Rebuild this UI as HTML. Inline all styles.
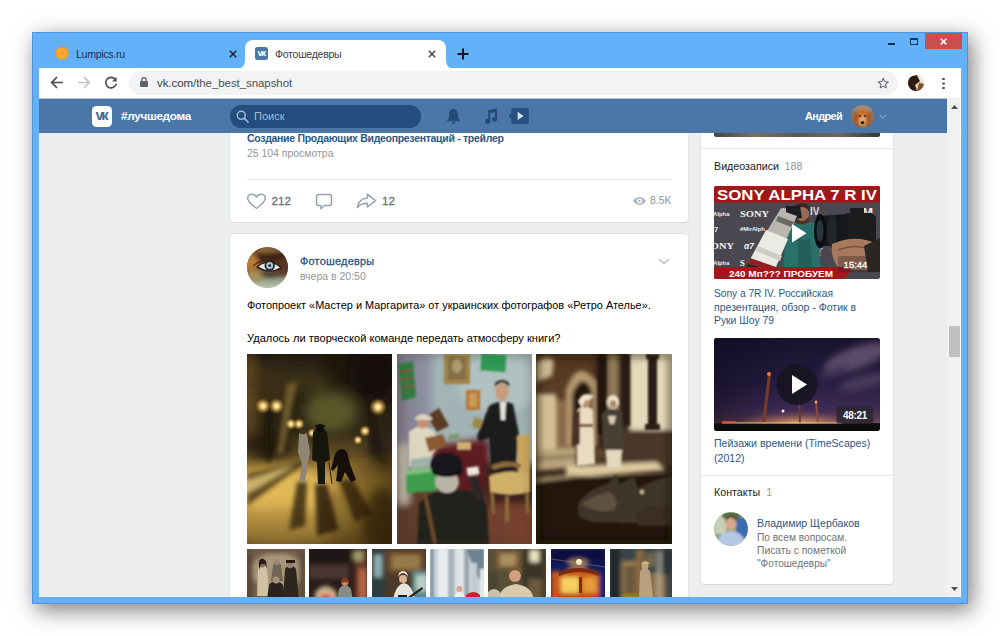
<!DOCTYPE html>
<html lang="ru">
<head>
<meta charset="utf-8">
<title>Фотошедевры</title>
<style>
*{box-sizing:border-box;margin:0;padding:0}
html,body{width:1000px;height:636px;overflow:hidden;background:#fff;font-family:"Liberation Sans",sans-serif;}
.abs{position:absolute}
#win{position:absolute;left:32px;top:32px;width:936px;height:572px;background:#63b1f8;border:1px solid #4f94d6;
  box-shadow:4px 6px 21px rgba(0,0,0,.52);}
#inner{position:absolute;left:39px;top:68px;width:922px;height:529px;background:#edeef0;overflow:hidden}
/* tab strip */
.tabtxt{position:absolute;font-size:10.6px;letter-spacing:-.3px;color:#1f2d3d;white-space:nowrap;line-height:14px}
#tab2{position:absolute;left:245px;top:40px;width:201px;height:29px;background:#fff;border-radius:8px 8px 0 0}
/* toolbar */
#pg{position:absolute;left:-39px;top:-68px;width:1000px;height:636px}
#toolbar{position:absolute;left:39px;top:68px;width:922px;height:30px;background:#fff}
#omni{position:absolute;left:129px;top:71px;width:769px;height:24px;border-radius:12px;background:#f1f3f4}
#url{position:absolute;left:157px;top:74.500px;font-size:11.5px;letter-spacing:-.07px;line-height:16px;color:#4d5156;white-space:nowrap}
#url b{font-weight:normal;color:#3a3d41}
/* vk header */
#vkh{position:absolute;left:39px;top:98px;width:908px;height:35px;background:#4a76a8;border-top:1px solid #a9bfd8}
#vklogo{position:absolute;left:92px;top:106px;width:20px;height:20.500px;border-radius:4.500px;background:#fff}
#hash{position:absolute;left:121px;top:108px;font-size:11.8px;line-height:16px;font-weight:bold;color:#fff;letter-spacing:-.35px;white-space:nowrap}
#search{position:absolute;left:230px;top:104.500px;width:191px;height:23.400px;border-radius:12px;background:#244c7c}
#search span{position:absolute;left:24px;top:3.700px;font-size:11px;line-height:16px;color:#a3bdd6}
#uname{position:absolute;left:805px;top:108px;font-size:10.8px;line-height:16px;font-weight:bold;color:#fff;letter-spacing:-.55px}
/* scrollbar */
#sb{position:absolute;left:947px;top:98px;width:14px;height:499px;background:#f1f1f1;border-right:1px solid #fcfcfc}
#sbthumb{position:absolute;left:949px;top:326px;width:11px;height:31px;background:#c1c1c1}
/* cards */
.card{position:absolute;background:#fff;border-radius:4px;box-shadow:0 1px 0 0 #d7d8db,0 0 0 1px #e3e4e8}
.t13{position:absolute;font-size:13px;line-height:16px;white-space:nowrap;color:#000}
.grey{color:#939699}
.blue{color:#2a5885}
</style>
</head>
<body>
<div id="win"></div>

<!-- tab strip -->
<div id="tab2"></div>
<svg class="abs" style="left:237px;top:61px" width="8" height="8"><path d="M8 0v8H0a8 8 0 0 0 8-8z" fill="#fff"/></svg>
<svg class="abs" style="left:446px;top:61px" width="8" height="8"><path d="M0 0v8h8a8 8 0 0 1-8-8z" fill="#fff"/></svg>
<!-- lumpics favicon -->
<svg class="abs" style="left:55px;top:46px" width="14" height="14" viewBox="0 0 14 14"><circle cx="7" cy="7" r="6.6" fill="#f39a1e"/><circle cx="7" cy="7" r="5.2" fill="#fbb23a"/><g stroke="#f39a1e" stroke-width=".9"><path d="M7 2v10M2 7h10M3.5 3.5l7 7M10.5 3.5l-7 7"/></g></svg>
<div class="tabtxt" id="tt1" style="left:76px;top:46.500px;color:#15305a">Lumpics.ru</div>
<svg class="abs" style="left:228.500px;top:50px" width="8" height="8" viewBox="0 0 8 8"><path d="M.8.800l6.400 6.400M7.200.800L.8 7.200" stroke="#1b1f24" stroke-width="1.400"/></svg>
<!-- vk favicon -->
<svg class="abs" style="left:255px;top:47px" width="13" height="13" viewBox="0 0 13 13"><rect width="13" height="13" rx="2.5" fill="#4a76a8"/><text x="5.900" y="9.300" font-family="Liberation Sans, sans-serif" font-size="9.500" font-weight="bold" fill="#fff" text-anchor="middle" letter-spacing="-1.500">vк</text></svg>
<div class="tabtxt" id="tt2" style="left:275px;top:46.500px;color:#3c4043">Фотошедевры</div>
<svg class="abs" style="left:427.500px;top:50px" width="8" height="8" viewBox="0 0 8 8"><path d="M.8.800l6.400 6.400M7.200.800L.8 7.200" stroke="#3c4043" stroke-width="1.400"/></svg>
<svg class="abs" style="left:457px;top:48px" width="12" height="12" viewBox="0 0 12 12"><path d="M6 .5v11M.5 6h11" stroke="#10151b" stroke-width="2"/></svg>
<!-- window controls -->
<div class="abs" style="left:888px;top:43px;width:7px;height:2px;background:#0d2b4d"></div>
<div class="abs" style="left:909.500px;top:38px;width:8.500px;height:6.700px;border:1px solid #17365c;border-top-width:2px"></div>
<div class="abs" style="left:924.600px;top:32.500px;width:37.400px;height:16.700px;background:#c9504c"></div>
<svg class="abs" style="left:940.200px;top:38.200px" width="7.200" height="7.200" viewBox="0 0 9 9"><path d="M1 1l7 7M8 1l-7 7" stroke="#fff" stroke-width="1.900"/></svg>
<div id="inner"><div id="pg">
<!-- card 1 -->
<div class="card" style="left:230px;top:100px;width:458px;height:122px"></div>
<div class="t13 blue" id="c1title" style="left:247px;top:130.300px;font-size:10.5px;font-weight:bold;letter-spacing:-.3px">Создание Продающих Видеопрезентаций - трейлер</div>
<div class="t13 grey" id="c1views" style="left:247px;top:146.400px;font-size:10.45px">25 104 просмотра</div>
<div class="abs" style="left:247px;top:179px;width:425px;height:1px;background:#e7e8ec"></div>
<svg class="abs" style="left:246px;top:193px" width="21" height="17" viewBox="0 0 21 17"><path d="M10.500 15.300C7 12.600 1.700 9.200 1.700 5.300 1.700 2.900 3.500 1.200 5.800 1.200c1.900 0 3.500 1 4.700 2.900 1.200-1.900 2.800-2.900 4.700-2.900 2.300 0 4.100 1.700 4.100 4.100 0 3.900-5.300 7.300-8.800 10z" fill="none" stroke="#99a2ad" stroke-width="1.500" stroke-linejoin="round"/></svg>
<div class="t13" id="n212" style="left:271.500px;top:193px;font-size:11.7px;color:#67707a;-webkit-text-stroke:.3px #67707a">212</div>
<svg class="abs" style="left:315px;top:193px" width="18" height="17" viewBox="0 0 18 17"><path d="M3.500 1.500h11a2 2 0 0 1 2 2v7a2 2 0 0 1-2 2H9.500L6 15.800V12.500H3.500a2 2 0 0 1-2-2v-7a2 2 0 0 1 2-2z" fill="none" stroke="#99a2ad" stroke-width="1.500" stroke-linejoin="round"/></svg>
<svg class="abs" style="left:356px;top:193px" width="21" height="16" viewBox="0 0 21 16"><path d="M11.500 1.200l8 6.400-8 6.400v-3.800C6.500 10.200 3.500 11.500 1.300 14.500 2 9.500 5 5.500 11.500 5z" fill="none" stroke="#99a2ad" stroke-width="1.500" stroke-linejoin="round"/></svg>
<div class="t13" id="n12" style="left:382px;top:193px;font-size:11.7px;color:#67707a;-webkit-text-stroke:.3px #67707a">12</div>
<svg class="abs" style="left:633px;top:197px" width="13" height="8" viewBox="0 0 13 8"><path d="M6.500 0C3.500 0 1.300 1.800 0 4c1.300 2.200 3.500 4 6.500 4S11.700 6.200 13 4C11.700 1.800 9.500 0 6.500 0z" fill="#b2b9c2"/><circle cx="6.500" cy="4" r="2.500" fill="#fff"/><circle cx="6.500" cy="4" r="1.200" fill="#b2b9c2"/></svg>
<div class="t13" id="n85k" style="left:650px;top:193px;font-size:10.4px;color:#909399">8.5K</div>

<!-- card 2 -->
<div class="card" style="left:230px;top:234px;width:458px;height:400px"></div>
<!--AVATAR--><svg class="abs" style="left:247px;top:247px" width="41" height="41" viewBox="0 0 41 41" ><defs><clipPath id="avc"><circle cx="20.500" cy="20.500" r="20.500"/></clipPath>
<linearGradient id="avg" x1="0" y1="0" x2="0" y2="1"><stop offset="0" stop-color="#7a5a34"/><stop offset=".2" stop-color="#5a3420"/><stop offset=".45" stop-color="#6a4428"/><stop offset=".62" stop-color="#7a6840"/><stop offset=".8" stop-color="#93a088"/><stop offset="1" stop-color="#bcc4b0"/></linearGradient></defs>
<g clip-path="url(#avc)"><rect width="41" height="41" fill="url(#avg)"/>
<g filter="url(#b2)"><ellipse cx="4" cy="15" rx="8" ry="9" fill="#b87a38"/><ellipse cx="24" cy="10" rx="15" ry="5" fill="#3e2218"/><ellipse cx="37" cy="20" rx="6" ry="9" fill="#5a3422"/><ellipse cx="8" cy="29" rx="8" ry="5" fill="#a89058"/><ellipse cx="24" cy="27" rx="11" ry="3" fill="#4a3a30"/><ellipse cx="20" cy="3" rx="12" ry="3" fill="#8a6a3c"/></g>
<g filter="url(#bh)"><path d="M9 20 q13-11 26 1 q-12 8 -26-1z" fill="#2a1c18"/><path d="M11.500 19.500 q11-8 21.500 1 q-10 6.500 -21.500-1z" fill="#ece8e0"/>
<circle cx="22.700" cy="18.600" r="5.200" fill="#1c2226"/><circle cx="22.700" cy="18.600" r="3.500" fill="#a9c6d2"/><circle cx="22.700" cy="18.600" r="1.400" fill="#20282c"/>
<path d="M6 19 q14-12 30 1" stroke="#3a241c" stroke-width="1.200" fill="none" opacity=".8"/></g></g></svg>
<!--/AVATAR-->
<div class="t13 blue" id="c2name" style="left:300px;top:253px;font-size:10.9px;letter-spacing:.25px;-webkit-text-stroke:.3px #2a5885">Фотошедевры</div>
<div class="t13 grey" id="c2date" style="left:300px;top:268px;font-size:10.5px">вчера в 20:50</div>
<svg class="abs" style="left:658.200px;top:258.200px" width="12" height="7" viewBox="0 0 12 7"><path d="M.8 1l5.200 4.400L11.200 1" fill="none" stroke="#bcc1c8" stroke-width="1.500"/></svg>
<div class="t13" id="c2l1" style="left:247px;top:297px;font-size:10.92px">Фотопроект «Мастер и Маргарита» от украинских фотографов «Ретро Ателье».</div>
<div class="t13" id="c2l2" style="left:247px;top:330px;font-size:11.08px">Удалось ли творческой команде передать атмосферу книги?</div>
<!--PHOTOS--><svg width="0" height="0" style="position:absolute"><defs>
<filter id="b1" x="-20%" y="-20%" width="140%" height="140%"><feGaussianBlur stdDeviation="1"/></filter>
<filter id="b2" x="-20%" y="-20%" width="140%" height="140%"><feGaussianBlur stdDeviation="2"/></filter>
<filter id="b3" x="-30%" y="-30%" width="160%" height="160%"><feGaussianBlur stdDeviation="3.500"/></filter>
<filter id="b6" x="-40%" y="-40%" width="180%" height="180%"><feGaussianBlur stdDeviation="6"/></filter>
<filter id="b10" x="-50%" y="-50%" width="200%" height="200%"><feGaussianBlur stdDeviation="10"/></filter>
<filter id="bh" x="-10%" y="-10%" width="120%" height="120%"><feGaussianBlur stdDeviation=".5"/></filter>
</defs></svg>
<svg class="abs" style="left:247px;top:354px" width="145" height="190" viewBox="0 0 145 190" ><defs><clipPath id="p1c"><rect width="145" height="190"/></clipPath>
<linearGradient id="p1g" x1="0" y1="0" x2="0" y2="1"><stop offset="0" stop-color="#1b150b"/><stop offset=".4" stop-color="#2e2714"/><stop offset=".54" stop-color="#6a5326"/><stop offset=".64" stop-color="#b8923e"/><stop offset=".8" stop-color="#c29a44"/><stop offset="1" stop-color="#9a7a36"/></linearGradient>
<linearGradient id="p1r" x1="0" y1="0" x2="1" y2="0"><stop offset="0" stop-color="#2e1e08" stop-opacity="0"/><stop offset=".85" stop-color="#2e1e08" stop-opacity=".7"/></linearGradient><linearGradient id="p1b" x1="0" y1="0" x2="0" y2="1"><stop offset=".8" stop-color="#2e1e08" stop-opacity="0"/><stop offset="1" stop-color="#2e1e08" stop-opacity=".45"/></linearGradient><radialGradient id="lamp"><stop offset="0" stop-color="#fffbe0"/><stop offset=".3" stop-color="#f8d67c" stop-opacity=".95"/><stop offset="1" stop-color="#c88a2c" stop-opacity="0"/></radialGradient></defs>
<g clip-path="url(#p1c)"><rect width="145" height="190" fill="url(#p1g)"/>
<g filter="url(#b6)">
<ellipse cx="2" cy="40" rx="7" ry="45" fill="#6a5026"/>
<ellipse cx="26" cy="30" rx="22" ry="26" fill="#3a2d15"/><ellipse cx="84" cy="58" rx="26" ry="20" fill="#5a5629"/><ellipse cx="62" cy="28" rx="20" ry="12" fill="#3a3218"/>
<ellipse cx="45" cy="8" rx="36" ry="8" fill="#2a2212"/>
<ellipse cx="128" cy="22" rx="26" ry="26" fill="#14100a"/>
<ellipse cx="134" cy="90" rx="14" ry="26" fill="#2a2413"/>
<ellipse cx="22" cy="90" rx="24" ry="16" fill="#261e10"/>
<ellipse cx="40" cy="136" rx="58" ry="20" fill="#e0b856"/>
<ellipse cx="36" cy="172" rx="50" ry="22" fill="#c9a24a"/>
<ellipse cx="136" cy="168" rx="20" ry="34" fill="#4a3a1a"/>
<ellipse cx="100" cy="118" rx="36" ry="7" fill="#ad8d48"/>
<ellipse cx="95" cy="150" rx="20" ry="16" fill="#a8863a"/>
</g>
<g filter="url(#b2)">
<path d="M0 120 L62 106 L0 152z" fill="#2e2410" opacity=".7"/>
<path d="M0 127 L48 111 L0 139z" fill="#e0c57a" opacity=".85"/>
<path d="M40 30 L50 28 L36 100 L30 100z" fill="#7c6534" opacity=".8"/>
<path d="M120 40 L126 40 L132 100 L126 100z" fill="#18130a" opacity=".7"/>
<path d="M20 55 L24 55 L23 108 L20 108z" fill="#18130a"/>
<path d="M50 128 L60 128 L58 172 L42 176z" fill="#3a2a10" opacity=".85"/>
<path d="M68 130 L80 130 L92 176 L70 182z" fill="#33250e" opacity=".9"/>
<path d="M92 126 L106 126 L126 160 L108 168z" fill="#35270f" opacity=".85"/>
</g>
<rect x="72" y="104" width="90" height="100" fill="url(#p1r)" filter="url(#b6)"/><rect width="145" height="190" fill="url(#p1b)"/><circle cx="16" cy="52" r="8" fill="url(#lamp)"/><circle cx="29.500" cy="52" r="8" fill="url(#lamp)"/>
<circle cx="44" cy="70" r="6" fill="url(#lamp)"/><circle cx="52" cy="70" r="6" fill="url(#lamp)"/>
<circle cx="131" cy="53" r="9" fill="url(#lamp)"/><circle cx="118" cy="77" r="6" fill="url(#lamp)"/><circle cx="111" cy="86" r="5" fill="url(#lamp)"/><circle cx="65" cy="79" r="5" fill="url(#lamp)"/>
<g filter="url(#bh)">
<path d="M52 80 q4-6 8 0 l3 18 -2 12 -3 18 -6 0 3-18 -4-12z" fill="#8e8670"/>
<circle cx="56" cy="77" r="3.300" fill="#3a3020"/>
<path d="M66 78 q7-8 14 0 l3 28 -5 2 0 22 -7 0 -1-22 -5-2z" fill="#17130c"/>
<circle cx="73" cy="74" r="4" fill="#100d08"/><rect x="68" y="71" width="10" height="1.600" fill="#100d08"/>
<path d="M88 100 q6-9 12-2 l3 12 6 16 -5 2 -6-10 -4 10 -5-1 2-16 -5 6 -2-2z" fill="#15110a"/>
<path d="M82 108 l3 22" stroke="#2a2010" stroke-width="1"/>
</g></g></svg>
<svg class="abs" style="left:397px;top:354px" width="135" height="190" viewBox="0 0 135 190" ><defs><clipPath id="p2c"><rect width="135" height="190"/></clipPath>
<linearGradient id="p2g" x1="0" y1="0" x2="1" y2="0"><stop offset="0" stop-color="#7d7688"/><stop offset=".22" stop-color="#8f93a3"/><stop offset=".3" stop-color="#a3b3b6"/><stop offset="1" stop-color="#9fb2b4"/></linearGradient>
<linearGradient id="p2f" x1="0" y1="0" x2="1" y2="0"><stop offset="0" stop-color="#5a3a2a"/><stop offset="1" stop-color="#7b4430"/></linearGradient></defs>
<g clip-path="url(#p2c)"><rect width="135" height="190" fill="url(#p2g)"/>
<g filter="url(#b3)">
<rect x="-5" y="128" width="150" height="70" fill="url(#p2f)"/>
<ellipse cx="100" cy="30" rx="40" ry="30" fill="#b4c4c2" opacity=".8"/>
<rect x="0" y="90" width="12" height="60" fill="#b9b3a2"/>
<path d="M32 92 L92 84 L96 140 L40 140z" fill="#5d1a22"/>
<rect x="88" y="110" width="50" height="40" fill="#3c241e"/>
</g>
<g filter="url(#b1)">
<path d="M1 10 l15-3 3 36 -14 4z" fill="#327a42"/><path d="M3 18 l12-2M4 26 l12-2M5 34 l12-2" stroke="#8a4a3a" stroke-width="2"/>
<rect x="84" y="0" width="25" height="17" fill="#2f9a55" transform="rotate(4 96 8)"/>
<rect x="47" y="0" width="26" height="30" fill="#a08444"/><rect x="51" y="3" width="18" height="23" fill="#85704a"/><ellipse cx="60" cy="12" rx="5" ry="7" fill="#b09a6a"/>
<rect x="69" y="36" width="14" height="20" fill="#b9762f"/><rect x="72" y="39" width="8" height="14" fill="#c89a58"/>
<path d="M30 62 l12-8 10 18 -12 6z" fill="#5a3a22"/>
<!-- standing man -->
<path d="M92 52 q12-8 24-2 l6 30 -4 40 -24 0 -2-36 -10 4 -2-6z" fill="#1c1a1f"/>
<path d="M103 48 l6 0 -1 18 -4 0z" fill="#e9e6e0"/>
<ellipse cx="105" cy="38" rx="6.500" ry="9" fill="#c99a7e"/><path d="M98 33 q7-9 14 0 l0-4 q-7-6 -14 0z" fill="#2a1c14"/>
<rect x="76" y="64" width="9" height="10" fill="#9a8a4a" transform="rotate(20 80 69)"/>
<!-- sitting man -->
<path d="M12 78 q10-10 24-2 l8 14 -8 10 -6 12 -18 0z" fill="#ddd6bf"/>
<ellipse cx="26" cy="68" rx="6" ry="6.500" fill="#c98e72"/><path d="M18 64 q8-8 17 0 l0 2 -17 0z" fill="#d9d4c0"/>
<path d="M28 84 l18-4 4 12 -18 6z" fill="#8a5a30"/>
<rect x="14" y="104" width="20" height="10" fill="#9fb0a8" transform="rotate(-8 24 109)"/>
<path d="M9 116 l30-3 1 24 -30 2z" fill="#3f9c4e"/><path d="M9 116 l30-3 0 5 -30 3z" fill="#7fc07a"/>
<rect x="60" y="88" width="14" height="8" fill="#c9b070"/><rect x="52" y="80" width="10" height="6" fill="#7f9a70"/>
<!-- chair -->
<path d="M120 82 l13-2 0 42 -12 2z" fill="#c8a65c"/>
<path d="M92 122 q20-8 41-2 l0 18 q-20 6 -40 0z" fill="#cfb069"/>
<path d="M94 112 q14-8 30-2 l0 4 q-14-4 -28 2z" fill="#8a6a3a"/>
<path d="M93 138 l4 0 1 22 -3 0zM108 142 l4 0 0 26 -4 0zM128 138 l4 0 0 22 -3 0z" fill="#8a6a3a"/>
<!-- foreground figure -->
<path d="M22 150 q10-16 42-14 q22 0 26 16 l2 40 -72 0z" fill="#23221f"/>
<ellipse cx="50" cy="128" rx="12" ry="11" fill="#b9b5a7"/>
<ellipse cx="49" cy="111" rx="16" ry="12" fill="#17161a"/><path d="M34 116 q16 10 32-2 l-2 6 q-14 6 -28 0z" fill="#0e0d10"/>
<path d="M26 140 l4 0 10 50 -4 0z" fill="#6a4a2a"/>
<rect x="70" y="113" width="12" height="8" fill="#ece8df" transform="rotate(-8 76 117)"/>
<path d="M72 122 l8 0 8 22 -10 4z" fill="#2a2825"/>
</g>
<rect width="135" height="190" fill="none" stroke="#3a2a22" stroke-opacity=".25" stroke-width="6" filter="url(#b3)"/>
</g></svg>
<svg class="abs" style="left:536px;top:354px" width="136" height="190" viewBox="0 0 136 190" ><defs><clipPath id="p3c"><rect width="136" height="190"/></clipPath>
<linearGradient id="p3g" x1="0" y1="0" x2="0" y2="1"><stop offset="0" stop-color="#52351f"/><stop offset=".5" stop-color="#684a32"/><stop offset=".6" stop-color="#3a2a1c"/><stop offset="1" stop-color="#231911"/></linearGradient></defs>
<g clip-path="url(#p3c)"><rect width="136" height="190" fill="url(#p3g)"/>
<g filter="url(#b2)">
<rect x="92" y="-5" width="50" height="82" fill="#e6d9ba"/>
<rect x="58" y="-5" width="36" height="100" fill="#3a281c"/>
<rect x="72" y="0" width="10" height="70" fill="#8f7a58"/>
<path d="M0 40 l20 0 2 58 -22 0z" fill="#d4c096"/><rect x="20" y="46" width="9" height="50" fill="#8a6a48"/>
<path d="M0 10 q8-10 18-4 l-2 16 -16 6z" fill="#cdb890"/>
<path d="M30 92 l0-56 q12-34 30-8 l0 64z" fill="#b59a6e"/>
<path d="M36 92 l0-52 q10-24 20-4 l0 56z" fill="#21160f"/>
<rect x="84" y="76" width="56" height="34" fill="#49372a"/>
<path d="M0 96 l40-3 0 20 -40 4z" fill="#b9a47e"/><path d="M0 104 l40-3 0 2 -40 3z" fill="#5a4632"/>
<path d="M30 112 l90-4 10 8 -100 8z" fill="#dccaa0"/>
<rect x="-5" y="122" width="150" height="75" fill="#211811"/>
<path d="M0 124 l40-4 0 3 -40 5z" fill="#a8946c"/>
</g>
<g filter="url(#b1)">
<rect x="112" y="0" width="9" height="72" fill="#2c1f16"/><rect x="109" y="70" width="15" height="6" fill="#2c1f16"/><rect x="110" y="0" width="13" height="5" fill="#2c1f16"/>
<rect x="86" y="0" width="8" height="72" fill="#2a1d14"/><rect x="62" y="0" width="8" height="80" fill="#241911"/>
<!-- figure 1 -->
<path d="M41 56 q8-8 16 0 l2 54 -18 2z" fill="#e9dcc0"/><path d="M38 60 l6-4 0 34 -8 2z" fill="#4a3020"/>
<ellipse cx="50" cy="48" rx="5" ry="6" fill="#b98e6a"/><path d="M42 48 q4-12 16-6 l-4 4 q-6-2 -8 8z" fill="#efe4cc"/>
<rect x="42" y="70" width="15" height="3" fill="#6a3a2a"/>
<!-- figure 2 -->
<path d="M66 60 q10-10 20-2 l2 40 -6 8 -14-2z" fill="#4a4034"/>
<path d="M70 96 l16 0 -1 18 -14 0z" fill="#e4d8bc"/>
<ellipse cx="77" cy="48" rx="6" ry="7" fill="#eee6d2"/><ellipse cx="77" cy="50" rx="3.500" ry="4" fill="#b08a68"/>
<path d="M72 62 l8 0 -2 8 -4 0z" fill="#d8ccb0"/>
<!-- dog -->
<path d="M42 150 q10-16 30-20 l8-10 4 10 14-8 4 12 q20-10 34-12 l0 40 q-30 10 -60 6 q-24 2 -34-6z" fill="#41352a"/>
<path d="M46 150 q12-10 28-12 q10 8 4 18 q-18 4 -32-6z" fill="#5f5140"/>
<path d="M100 160 q14-12 36-8 l0 20 -34 0z" fill="#3a2f23"/>
<circle cx="106" cy="138" r="2" fill="#d8c8a0"/>
</g>
<rect width="136" height="190" fill="none" stroke="#1a120c" stroke-opacity=".5" stroke-width="8" filter="url(#b3)"/>
</g></svg>
<svg class="abs" style="left:247px;top:549px" width="58" height="58" viewBox="0 0 58 58" ><defs><clipPath id="t1c"><rect width="58" height="58"/></clipPath></defs><g clip-path="url(#t1c)"><rect width="58" height="58" fill="#75624c"/>
<g filter="url(#b2)"><ellipse cx="30" cy="22" rx="26" ry="18" fill="#a8957a"/><rect x="-2" y="-2" width="8" height="62" fill="#5a4a38"/><rect x="52" y="-2" width="8" height="62" fill="#5e4e3c"/><rect x="0" y="0" width="58" height="5" fill="#6a5844"/></g>
<g filter="url(#bh)"><path d="M11 20 q4-10 9-1 l2 28 -12 0z" fill="#d0c2a6"/><circle cx="15" cy="15" r="3.500" fill="#8a705a"/><path d="M12 12 q3-5 7 0 l1 8 -2-5 -4 0 -2 6z" fill="#2a1e16"/>
<path d="M26 16 q4-6 8 0 l2 16 -12 0z" fill="#6f6656"/><circle cx="30" cy="13" r="3" fill="#a08870"/>
<path d="M38 20 q5-8 11 0 l3 30 -16 0z" fill="#2e261e"/><circle cx="43" cy="16" r="3.300" fill="#9a8068"/><rect x="39" y="11" width="9" height="3" fill="#241c16"/>
<path d="M22 36 q6-8 14 0 l3 22 -20 0z" fill="#2a221c"/><circle cx="29" cy="31" r="3.500" fill="#a89078"/></g></g></svg>
<svg class="abs" style="left:309px;top:549px" width="58" height="58" viewBox="0 0 58 58" ><defs><clipPath id="t2c"><rect width="58" height="58"/></clipPath></defs><g clip-path="url(#t2c)"><rect width="58" height="58" fill="#2b1d19"/>
<g filter="url(#b2)"><rect x="0" y="16" width="40" height="14" fill="#4a3630"/><rect x="0" y="0" width="42" height="12" fill="#1e1412"/><path d="M6 58 l0-14 q10-14 22 0 l0 14z" fill="#c8b48e"/><rect x="12" y="46" width="10" height="12" fill="#b04a3a"/><rect x="46" y="0" width="12" height="58" fill="#6a3a2a"/><rect x="50" y="20" width="8" height="30" fill="#b8684a"/><rect x="44" y="2" width="10" height="10" fill="#9a9a6a"/></g>
<g filter="url(#bh)"><path d="M30 40 q6-8 12 0 l3 18 -18 0z" fill="#8a8a84"/><circle cx="36" cy="33" r="3.500" fill="#c09070"/><path d="M32 32 q4-7 8 0 l0 3 q-4-4 -8 0z" fill="#8a3a1a"/></g></g></svg>
<svg class="abs" style="left:372px;top:549px" width="54" height="58" viewBox="0 0 54 58" ><defs><clipPath id="t3c"><rect width="54" height="58"/></clipPath></defs><g clip-path="url(#t3c)"><rect width="54" height="58" fill="#4a3a2a"/>
<g filter="url(#b2)"><rect x="0" y="0" width="13" height="58" fill="#2b3c40"/><rect x="2" y="6" width="8" height="22" fill="#8fb0b0"/><rect x="14" y="2" width="38" height="22" fill="#6a4a2a"/><rect x="20" y="6" width="28" height="14" fill="#9a7a4a"/><rect x="40" y="22" width="16" height="36" fill="#5a8a8a"/><rect x="44" y="26" width="12" height="16" fill="#b8d0c8"/></g>
<g filter="url(#bh)"><path d="M20 58 q2-22 12-24 q10 2 12 24z" fill="#e9e4da"/><circle cx="31" cy="30" r="4" fill="#d8b090"/><path d="M26 28 q5-8 10 0 l-1-4 q-4-4 -8 0z" fill="#e8e0c8"/><rect x="26" y="46" width="9" height="8" fill="#1a1418"/><path d="M36 48 l14-10 1 2 -14 10z" fill="#2a2020"/></g></g></svg>
<svg class="abs" style="left:430px;top:549px" width="54" height="58" viewBox="0 0 54 58" ><defs><clipPath id="t4c"><rect width="54" height="58"/></clipPath></defs><g clip-path="url(#t4c)"><rect width="54" height="58" fill="#c9d2d6"/>
<g filter="url(#b1)"><rect x="0" y="0" width="4" height="58" fill="#8a9aa4"/><rect x="8" y="0" width="10" height="58" fill="#e8ecec"/><rect x="18" y="0" width="6" height="58" fill="#a8b4bc"/><rect x="26" y="0" width="8" height="58" fill="#dfe5e6"/><rect x="34" y="0" width="5" height="58" fill="#9aa8b2"/><path d="M36 0 l18 0 0 40 -8-16z" fill="#6f8290"/><rect x="42" y="14" width="5" height="44" fill="#c0cad0"/><rect x="50" y="20" width="4" height="38" fill="#e6eaec"/>
<rect x="0" y="50" width="54" height="8" fill="#b8b8b4"/></g>
<g filter="url(#bh)"><path d="M25 46 q4-8 9 0 l2 12 -13 0z" fill="#f2f0ec"/><circle cx="29.500" cy="40" r="3" fill="#d8a888"/><path d="M36 46 q8-6 14 0 l0 6 -14 2z" fill="#c8202c"/></g></g></svg>
<svg class="abs" style="left:488px;top:549px" width="58" height="58" viewBox="0 0 58 58" ><defs><clipPath id="t5c"><rect width="58" height="58"/></clipPath></defs><g clip-path="url(#t5c)"><rect width="58" height="58" fill="#5a5038"/>
<g filter="url(#b2)"><rect x="8" y="2" width="24" height="18" fill="#7a5a30"/><rect x="12" y="5" width="16" height="12" fill="#a89060"/><rect x="34" y="0" width="24" height="58" fill="#3a3426"/><rect x="42" y="1" width="9" height="12" fill="#e8e4c0"/><rect x="0" y="22" width="10" height="36" fill="#4a4430"/><rect x="40" y="30" width="14" height="28" fill="#6a5a3a"/></g>
<g filter="url(#bh)" transform="translate(0,-7)"><path d="M10 66 l0-8 q2-14 18-16 q16 2 18 16 l0 8z" fill="#d8cbb0"/><circle cx="27" cy="34" r="6" fill="#d0a080"/><path d="M20 32 q7-12 14 0 l-1-5 q-6-5 -12 0z" fill="#8a5a30"/><path d="M0 50 q6-6 12 0 l0 8 -12 0z" fill="#c8c0a8"/></g></g></svg>
<svg class="abs" style="left:551px;top:549px" width="54" height="58" viewBox="0 0 54 58" ><defs><clipPath id="t6c"><rect width="54" height="58"/></clipPath></defs><g clip-path="url(#t6c)"><rect width="54" height="58" fill="#101a5c"/>
<g filter="url(#b2)"><rect x="0" y="0" width="54" height="12" fill="#0c1040"/><ellipse cx="27" cy="15" rx="10" ry="6" fill="#f0c070" opacity=".5"/><rect x="0" y="22" width="8" height="36" fill="#c85a1c"/><path d="M6 58 l0-32 q20-14 44 0 l2 32z" fill="#c85418"/><rect x="10" y="28" width="18" height="16" fill="#f8d060"/><rect x="32" y="28" width="14" height="16" fill="#e89a38"/><rect x="6" y="44" width="46" height="14" fill="#b84814"/><rect x="48" y="24" width="6" height="30" fill="#1a2470"/></g>
<g filter="url(#bh)"><circle cx="28" cy="13" r="3" fill="#fff2c0"/><path d="M0 10 l54 8" stroke="#c0a080" stroke-width=".6" opacity=".7"/><rect x="28" y="28" width="3" height="16" fill="#7a2c0c"/><path d="M8 24 q19-10 40 0 l0 3 q-20-8 -40 0z" fill="#7a2c10"/></g></g></svg>
<svg class="abs" style="left:610px;top:549px" width="62" height="58" viewBox="0 0 62 58" ><defs><clipPath id="t7c"><rect width="62" height="58"/></clipPath></defs><g clip-path="url(#t7c)"><rect width="62" height="58" fill="#3b4448"/>
<g filter="url(#b2)"><rect x="0" y="0" width="10" height="58" fill="#23282a"/><rect x="12" y="12" width="16" height="40" fill="#a88450"/><rect x="14" y="16" width="12" height="30" fill="#6a5a3a"/><rect x="26" y="0" width="8" height="58" fill="#8a6a40"/><rect x="36" y="4" width="8" height="14" fill="#7a6a48"/><rect x="34" y="24" width="22" height="34" fill="#8a7048"/><rect x="52" y="0" width="10" height="26" fill="#2a3034"/><rect x="46" y="2" width="6" height="50" fill="#c8c4b0" opacity=".5"/></g>
<g filter="url(#bh)"><path d="M30 22 q5-6 10 0 l3 26 -14 0z" fill="#b8a080"/><circle cx="35" cy="17" r="3.500" fill="#c8a080"/><path d="M31 15 q4-6 9 0z" fill="#d0b880"/></g></g></svg>
<!--/PHOTOS-->

<!-- sidebar -->
<div class="card" style="left:701px;top:100px;width:192px;height:484px"></div>
<div class="abs" style="left:714px;top:128px;width:166px;height:9px;background:linear-gradient(90deg,#4a4440,#7a6e62 25%,#5e564e 50%,#70665a 75%,#3a3634);border-radius:0 0 2px 2px"></div>
<div class="abs" style="left:701px;top:148px;width:192px;height:1px;background:#e7e8ec"></div>
<div class="t13" id="svid" style="left:714px;top:158px;font-size:10.700px;color:#222">Видеозаписи <span style="color:#939699;margin-left:2.500px">188</span></div>
<!--VIDEO1--><svg class="abs" style="left:714px;top:186px" width="166" height="93" viewBox="0 0 166 93" ><defs><clipPath id="v1c"><rect width="166" height="93" rx="2"/></clipPath></defs>
<g clip-path="url(#v1c)"><rect width="166" height="93" fill="#4b4750"/>
<g font-family="Liberation Serif, serif" font-weight="bold" fill="#f3f1f0" font-size="8.500">
<text x="26" y="30.500" textLength="29" lengthAdjust="spacingAndGlyphs">SONY</text><text x="-9" y="63" textLength="29" lengthAdjust="spacingAndGlyphs">SONY</text><text x="26" y="80">S</text>
</g>
<g font-family="Liberation Sans, sans-serif" fill="#efedf0" font-size="5.800" font-weight="bold">
<text x="-3" y="30">rAlpha</text><text x="26" y="45">#MirAlph</text><text x="0" y="46" font-size="7.500">7</text><text x="30" y="63" font-size="8.500" font-style="italic">α7</text><text x="-3" y="79">rAlpha</text><text x="66" y="26" font-size="5">#Mi</text><text x="96" y="29" font-size="10" fill="#d8d6da">IV</text><text x="141" y="31" font-size="13">#M</text><text x="152" y="66" font-size="12" fill="#c8c6ca">X</text><text x="100" y="70" font-size="13" fill="#b8b6ba" font-family="Liberation Serif, serif">Y</text>
</g>
<g filter="url(#bh)">
<path d="M73 38 q14-6 30 0 l4 44 -38 0z" fill="#2b6f6b"/><path d="M84 52 q8 4 12 0 l2 30 -14 0z" fill="#245f5c"/>
<path d="M80 20 q8-6 16 0 l0 10 -16 0z" fill="#3a2a22"/><ellipse cx="88" cy="29" rx="7.500" ry="8" fill="#9a6c54"/><path d="M81 30 q7 10 14 0 l0 6 q-7 5 -14 0z" fill="#4a3226"/>
<path d="M72 20 l14 0 2 12 -16 2z" fill="#1c1c20"/>
<path d="M66 24 l17 6 -12 26 -20-8z" fill="#b9b6ae"/><path d="M64 30 l16 6 -3 5 -15-6z" fill="#6a6862"/>
<path d="M52 44 l22 9 -12 28 -30 0 z" fill="#eceae4"/><path d="M44 60 l24 10 -2 5 -24-10z" fill="#cfccc4"/><path d="M36 72 l26 9 -2 4 -28-4z" fill="#8a2420"/><path d="M33 78 l27 6 -1 3 -28-3z" fill="#2a2624"/>
<path d="M132 27 l26 0 4 4 0 28 -30 0z" fill="#1a1a1e"/><rect x="136" y="22" width="14" height="7" fill="#1a1a1e"/>
<path d="M104 30 l30-2 0 32 -30 0z" fill="#16161a"/><ellipse cx="106" cy="45" rx="6" ry="17" fill="#0c0c0e"/><ellipse cx="118" cy="45" rx="5" ry="16.500" fill="#24282a"/><ellipse cx="106" cy="45" rx="3.500" ry="11" fill="#28383a"/>
<path d="M118 58 q18-8 34-4 l14 4 0 26 -40 0 q-10-12 -8-26z" fill="#a9795e"/><path d="M124 64 q14-6 28-2" stroke="#7a523c" stroke-width="1.500" fill="none"/>
<path d="M150 60 l16-8 0 34 -12 0z" fill="#2a2624"/>
</g>
<rect x="0" y="0" width="166" height="16.500" fill="#a3171b"/>
<path d="M0 81 l134 0 4 3 -8 9 -130 0z" fill="#a3171b"/>
<text x="83" y="14" font-family="Liberation Sans, sans-serif" font-weight="bold" font-size="15.500" fill="#fff" text-anchor="middle" textLength="160" lengthAdjust="spacingAndGlyphs">SONY ALPHA 7 R IV</text>
<text x="67" y="90.500" font-family="Liberation Sans, sans-serif" font-weight="bold" font-size="9.500" fill="#fff" text-anchor="middle" textLength="104" lengthAdjust="spacingAndGlyphs">240 Мп??? ПРОБУЕМ</text>
<path d="M78 38 l0 18.500 14.500-9.250z" fill="#fff"/>
<rect x="124" y="70" width="36" height="16" rx="2" fill="#2a2222" opacity=".35"/>
<text x="141.500" y="81.500" font-family="Liberation Sans, sans-serif" font-size="9.500" fill="#fff" text-anchor="middle" stroke="#fff" stroke-width=".3">15:44</text>
</g></svg>
<!--/VIDEO1-->
<div class="t13 blue" id="sv1a" style="left:714px;top:285.600px;font-size:10.17px">Sony a 7R IV. Российская</div>
<div class="t13 blue" id="sv1b" style="left:714px;top:298.600px;font-size:10.5px">презентация, обзор - Фотик в</div>
<div class="t13 blue" id="sv1c" style="left:714px;top:312.600px;font-size:10.37px">Руки Шоу 79</div>
<!--VIDEO2--><svg class="abs" style="left:714px;top:338px" width="166" height="93" viewBox="0 0 166 93" ><defs><clipPath id="v2c"><rect width="166" height="93" rx="2.500"/></clipPath>
<linearGradient id="v2g" x1="0" y1="0" x2="0" y2="1"><stop offset="0" stop-color="#17122c"/><stop offset=".45" stop-color="#241b40"/><stop offset=".75" stop-color="#3c2a52"/><stop offset=".88" stop-color="#5c3c54"/><stop offset=".915" stop-color="#7a4c50"/><stop offset=".92" stop-color="#120d10"/><stop offset="1" stop-color="#0a0808"/></linearGradient>
<radialGradient id="v2r" cx=".5" cy="1" r=".5" gradientTransform="matrix(1 0 0 .6 0 .4)"><stop offset="0" stop-color="#f0b070" stop-opacity=".95"/><stop offset=".5" stop-color="#c07a60" stop-opacity=".5"/><stop offset="1" stop-color="#8a5a60" stop-opacity="0"/></radialGradient>
<linearGradient id="v2l" x1="0" y1="0" x2="1" y2="0"><stop offset="0" stop-color="#0e0a1e" stop-opacity=".55"/><stop offset=".45" stop-color="#0e0a1e" stop-opacity="0"/></linearGradient></defs>
<g clip-path="url(#v2c)"><rect width="166" height="93" fill="url(#v2g)"/>
<rect width="166" height="85" fill="url(#v2l)"/>
<rect x="20" y="45" width="130" height="40.500" fill="url(#v2r)"/>
<g filter="url(#b3)"><ellipse cx="142" cy="20" rx="34" ry="11" fill="#5e4e6a" opacity=".95" transform="rotate(-20 142 20)"/><ellipse cx="150" cy="44" rx="26" ry="7" fill="#4e3e5e" opacity=".85" transform="rotate(-15 150 44)"/><ellipse cx="120" cy="34" rx="16" ry="5" fill="#43355a" opacity=".8" transform="rotate(-25 120 34)"/></g>
<g filter="url(#bh)"><path d="M54 36 l3 0 -6 50 -3 0z" fill="#7a3a28"/><circle cx="55" cy="36" r="2" fill="#e87a40"/>
<path d="M84 56 l2 0 1 30 -2 0z" fill="#6a3a30"/><path d="M101 64 l2 0 2 22 -2 0z" fill="#8a4a38"/><circle cx="102" cy="64" r="1.500" fill="#f0a060"/>
<circle cx="69" cy="73" r="1.500" fill="#fff0e0"/>
<rect x="8" y="84.300" width="120" height="1.300" fill="#f0c080" opacity=".75"/><rect x="8" y="83" width="14" height="1.500" fill="#e04a3a" opacity=".8"/></g>
<circle cx="83" cy="46.500" r="20.500" fill="#17131f" opacity=".88"/>
<path d="M78 37 l0 19 15-9.500z" fill="#fff"/>
<rect x="122.500" y="68" width="37" height="17.500" rx="2.500" fill="#2a2630" opacity=".85"/>
<text x="141" y="81" font-family="Liberation Sans, sans-serif" font-size="10" font-weight="bold" fill="#fff" text-anchor="middle" letter-spacing="-.3">48:21</text>
</g></svg>
<!--/VIDEO2-->
<div class="t13 blue" id="sv2a" style="left:714px;top:435px;font-size:10.56px">Пейзажи времени (TimeScapes)</div>
<div class="t13 blue" id="sv2b" style="left:714px;top:449.500px;font-size:10.6px">(2012)</div>
<div class="abs" style="left:701px;top:475px;width:192px;height:1px;background:#e7e8ec"></div>
<div class="t13" id="scont" style="left:714px;top:484px;font-size:10.700px;color:#222">Контакты <span style="color:#939699;margin-left:3px">1</span></div>
<!--CAVATAR--><svg class="abs" style="left:713.5px;top:512px" width="34" height="34" viewBox="0 0 34 34" ><defs><clipPath id="cac"><circle cx="17" cy="17" r="16.800"/></clipPath></defs>
<g clip-path="url(#cac)"><rect width="34" height="34" fill="#8aa078"/>
<g filter="url(#b1)"><rect x="0" y="0" width="12" height="22" fill="#c8d0b8"/><rect x="22" y="6" width="14" height="20" fill="#3a6ab0"/><rect x="8" y="0" width="18" height="6" fill="#5a7048"/>
<path d="M2 34 q2-14 15-15 q13 1 15 15z" fill="#b4c8e4"/><ellipse cx="17" cy="12" rx="5.500" ry="6.500" fill="#d8a888"/><path d="M11 10 q6-9 12 0 l0-4 q-6-5 -12 0z" fill="#5a3a28"/></g></g></svg>
<!--/CAVATAR-->
<div class="t13 blue" id="scn" style="left:757px;top:514.500px;font-size:10.57px">Владимир Щербаков</div>
<div class="t13" id="sc1" style="left:757px;top:529.500px;font-size:10.2px;color:#6f7479">По всем вопросам.</div>
<div class="t13" id="sc2" style="left:757px;top:542.500px;font-size:10.3px;color:#6f7479">Писать с пометкой</div>
<div class="t13" id="sc3" style="left:757px;top:556px;font-size:10.1px;color:#6f7479">"Фотошедевры"</div>

<div id="vkh"></div>
<div id="vklogo"></div>
<svg class="abs" style="left:92px;top:106px" width="20" height="20" viewBox="0 0 20 20"><text x="8.800" y="14" font-family="Liberation Sans, sans-serif" font-size="14.500" font-weight="bold" fill="#3f6797" text-anchor="middle" letter-spacing="-2.400">vк</text></svg>
<div id="hash">#лучшедома</div>
<div id="search"><span>Поиск</span></div>
<svg class="abs" style="left:236px;top:110px" width="13" height="13" viewBox="0 0 13 13"><circle cx="5.300" cy="5.300" r="4" fill="none" stroke="#9fbbd9" stroke-width="1.500"/><path d="M8.300 8.300l3.700 3.700" stroke="#9fbbd9" stroke-width="1.700" stroke-linecap="round"/></svg>
<!-- bell -->
<svg class="abs" style="left:446px;top:108px" width="15" height="17" viewBox="0 0 15 17"><path d="M7.500 1C4.600 1 3 3.200 3 6v3.500L1.200 12.300v.9h12.600v-.9L12 9.500V6c0-2.800-1.600-5-4.500-5z" fill="#254a78"/><path d="M5.700 14.300a1.800 1.800 0 0 0 3.600 0z" fill="#254a78"/></svg>
<!-- music -->
<svg class="abs" style="left:484px;top:108px" width="14" height="16" viewBox="0 0 14 16"><path d="M4.200 2.300L13 .3v11a2.500 2.500 0 1 1-2-2.400V4.200L6.200 5.300v8a2.500 2.500 0 1 1-2-2.400z" fill="#254a78"/></svg>
<!-- video -->
<svg class="abs" style="left:509px;top:106px" width="20" height="20" viewBox="0 0 20 20"><path d="M4.400 1.900h13.400a2 2 0 0 1 2 2v12a2 2 0 0 1-2 2H4.400a2 2 0 0 1-2-2v-3L-.4 9.900l2.800-3V3.900a2 2 0 0 1 2-2z" fill="#27507f"/><path d="M8.600 5.800v8.200l6-4.100z" fill="#d5e1ef"/></svg>
<div id="uname">Андрей</div>
<svg class="abs" style="left:850.500px;top:104.500px" width="23" height="23" viewBox="0 0 24 24"><defs><clipPath id="dav"><circle cx="12" cy="12" r="12"/></clipPath></defs><g clip-path="url(#dav)"><rect width="24" height="24" fill="#8a7462"/><g filter="url(#b1)"><rect x="0" y="0" width="24" height="6" fill="#a08c78"/><ellipse cx="12" cy="13" rx="8.500" ry="9" fill="#c8702c"/><ellipse cx="5.500" cy="14" rx="3" ry="6" fill="#a85a22"/><ellipse cx="18.500" cy="14" rx="3" ry="6" fill="#a85a22"/><ellipse cx="12" cy="16" rx="4" ry="5" fill="#e0a468"/><path d="M0 19l7 2 3 3H0zM24 19l-7 2-3 3h10z" fill="#5d5a60"/></g><ellipse cx="12" cy="18.500" rx="2" ry="1.500" fill="#2a1a14"/><circle cx="9.300" cy="11.500" r="1" fill="#2a1a12"/><circle cx="14.700" cy="11.500" r="1" fill="#2a1a12"/></g></svg>
<svg class="abs" style="left:879px;top:114px" width="8" height="5" viewBox="0 0 8 5"><path d="M.7.700L4 4 7.300.700" fill="none" stroke="#7f9fc4" stroke-width="1.300"/></svg>

<div id="toolbar"></div>
<div id="omni"></div>
<svg class="abs" style="left:50px;top:76px" width="14" height="13" viewBox="0 0 14 13"><path d="M13 6.500H2M7 1.200L1.700 6.500L7 11.800" fill="none" stroke="#4d5156" stroke-width="1.7"/></svg>
<svg class="abs" style="left:77px;top:76px" width="14" height="13" viewBox="0 0 14 13"><path d="M1 6.500h11M7 1.200l5.300 5.300L7 11.800" fill="none" stroke="#c3c6c9" stroke-width="1.7"/></svg>
<svg class="abs" style="left:104px;top:76px" width="14" height="14" viewBox="0 0 14 14"><path d="M11.300 3.400A5.300 5.300 0 1 0 12.300 7.600" fill="none" stroke="#4d5156" stroke-width="1.7"/><path d="M12.600 .8v4.600H8z" fill="#4d5156"/></svg>
<svg class="abs" style="left:140px;top:77px" width="8" height="10" viewBox="0 0 8 10"><rect x="0" y="4" width="8" height="6" rx="1" fill="#5f6368"/><path d="M1.800 4.500V2.900a2.200 2.200 0 0 1 4.400 0v1.600" fill="none" stroke="#5f6368" stroke-width="1.300"/></svg>
<div id="url"><b>vk.com</b>/the_best_snapshot</div>
<svg class="abs" style="left:876.500px;top:76.500px" width="12.500" height="12.500" viewBox="0 0 16 16"><path d="M8 1.600l1.900 4.300 4.600.4-3.500 3.100 1 4.600L8 11.600 4 14l1-4.600L1.500 6.300l4.600-.4z" fill="none" stroke="#5f6368" stroke-width="1.300" stroke-linejoin="round"/></svg>
<svg class="abs" style="left:908px;top:75px" width="16" height="16" viewBox="0 0 16 16"><defs><clipPath id="cav"><circle cx="8" cy="8" r="8"/></clipPath></defs><g clip-path="url(#cav)"><rect width="16" height="16" fill="#e9c79a"/><path d="M0 2l9-2 3 6-5 4 2 6H0z" fill="#2a1c12"/><path d="M9 0h7v9l-4-3z" fill="#f4e9dc"/><path d="M11 8l5 1v7h-7z" fill="#7a5230"/></g></svg>
<div class="abs" style="left:942px;top:77.500px;width:2.600px;height:2.600px;border-radius:50%;background:#4d5156;box-shadow:0 4.500px 0 #4d5156,0 9px 0 #4d5156"></div>

<div id="sb"></div><div id="sbthumb"></div>
<svg class="abs" style="left:951px;top:104.500px" width="7" height="4" viewBox="0 0 9 5"><path d="M0 5L4.500 0 9 5z" fill="#505050"/></svg>
<svg class="abs" style="left:951px;top:587px" width="7" height="4" viewBox="0 0 9 5"><path d="M0 0L4.500 5 9 0z" fill="#505050"/></svg>

</div></div>
</body>
</html>
